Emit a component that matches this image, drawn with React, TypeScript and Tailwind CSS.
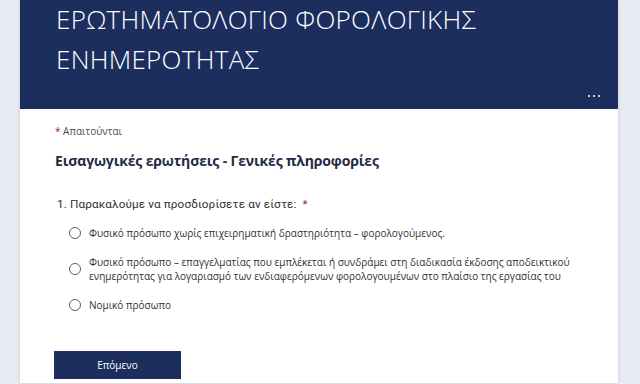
import React from "react";

const options = [
  ["Φυσικό πρόσωπο χωρίς επιχειρηματική δραστηριότητα – φορολογούμενος."],
  [
    "Φυσικό πρόσωπο – επαγγελματίας που εμπλέκεται ή συνδράμει στη διαδικασία έκδοσης αποδεικτικού",
    "ενημερότητας για λογαριασμό των ενδιαφερόμενων φορολογουμένων στο πλαίσιο της εργασίας του",
  ],
  ["Νομικό πρόσωπο"],
];

export default function App() {
  return (
    <div
      className="w-[640px] h-[384px] overflow-hidden bg-[#e7eaf1]"
      style={{ fontFamily: '"Open Sans", "Noto Sans", sans-serif' }}
    >
      <div className="ml-[20px] w-[598px] bg-white shadow-[0_0_3px_rgba(0,0,0,0.15)] min-h-[384px]">
        <div className="relative h-[110px] bg-[#1b2e5e] pl-[36px]">
          <div className="text-[26px] leading-[40px] font-light text-white tracking-[0.3px] -mt-[1px]">
            <div>ΕΡΩΤΗΜΑΤΟΛΟΓΙΟ ΦΟΡΟΛΟΓΙΚΗΣ</div>
            <div>ΕΝΗΜΕΡΟΤΗΤΑΣ</div>
          </div>
          <div className="absolute right-[18px] top-[96px] flex gap-[3px]">
            <span className="w-[2px] h-[2px] rounded-full bg-white" />
            <span className="w-[2px] h-[2px] rounded-full bg-white" />
            <span className="w-[2px] h-[2px] rounded-full bg-white" />
          </div>
        </div>
        <div className="pl-[35px] pt-[14px]">
          <div className="text-[10px] leading-[16px] text-[#4a4a4a]">
            <span className="text-[#a4262c]">*</span> Απαιτούνται
          </div>
          <div className="mt-[11px] text-[14px] leading-[22px] font-bold text-[#1f2b46] tracking-[-0.15px]">
            Εισαγωγικές ερωτήσεις - Γενικές πληροφορίες
          </div>
          <div
            className="mt-[23px] ml-[2px] text-[11.75px] leading-[18px] text-[#323130] tracking-[0.1px]"
            style={{ fontFamily: 'Roboto, "Open Sans", sans-serif' }}
          >
            1. Παρακαλούμε να προσδιορίσετε αν είστε:{" "}
            <span className="ml-[3px] text-[#a4262c]">*</span>
          </div>
          <div className="flex flex-col mt-[13px] gap-[15px]">
            {options.map((lines, i) => (
              <div key={i} className="flex items-center ml-[14px]">
                <span className="w-[12px] h-[12px] rounded-full border border-[#605e5c] bg-white shrink-0" />
                <div className="ml-[8px] text-[10px] leading-[14px] text-[#323130]">
                  {lines.map((l, j) => (
                    <div key={j}>{l}</div>
                  ))}
                </div>
              </div>
            ))}
          </div>
          <button className="mt-[39px] w-[127px] h-[28px] bg-[#1b2e5e] text-white text-[10px] flex items-center justify-center -ml-[1px]">
            Επόμενο
          </button>
        </div>
      </div>
    </div>
  );
}
